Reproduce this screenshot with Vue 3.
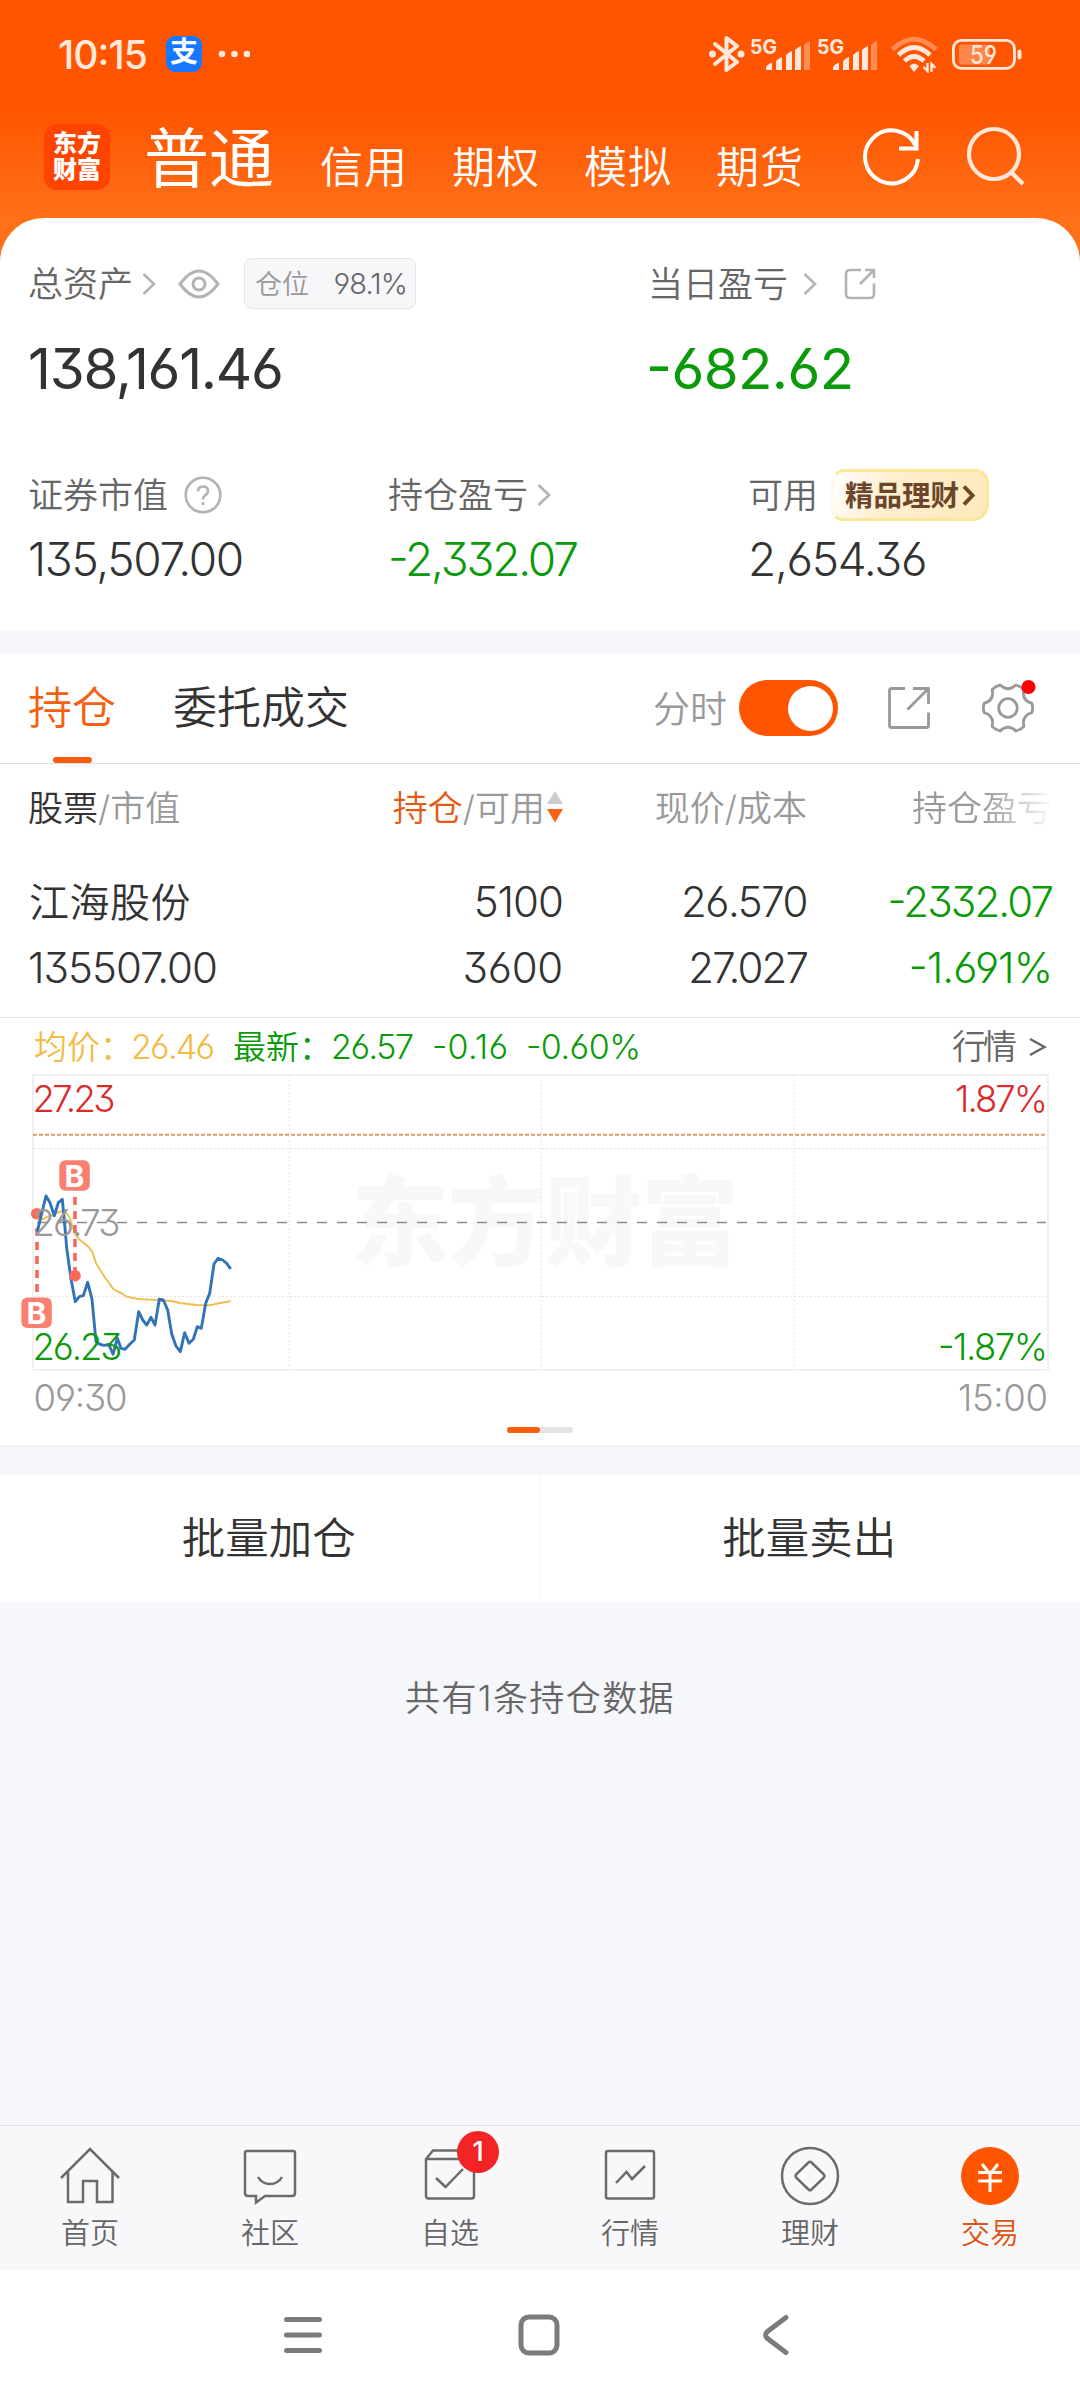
<script setup>
import { ref } from "vue";

const accounts = ["信用", "期权", "模拟", "期货"];
const showChart = ref(true);

const tabs = [
  { name: "首页", icon: "home" },
  { name: "社区", icon: "chat" },
  { name: "自选", icon: "pick", badge: 1 },
  { name: "行情", icon: "quote" },
  { name: "理财", icon: "money" },
  { name: "交易", icon: "trade", active: true }
];

const priceLine =
  "37.3,1231.7 46,1196 50,1202.7 54.3,1215.7 58.3,1202.7 62.3,1199.3 64.3,1220 66.7,1248 71,1279 75.3,1301.7 79.3,1296.7 83.3,1295.7 87.7,1282.3 92,1299.3 96,1341.7 100,1344.3 104.3,1345.3 108.7,1344.3 113,1354.3 117.3,1338.3 121,1348.3 125,1349.3 130,1344 134.3,1340 138.7,1311.7 142.7,1320 146.7,1325 151,1317.3 155,1325 159.3,1299.3 163.3,1300 167.7,1310 171.7,1334 176,1346 180.3,1351.7 184.7,1332.7 189,1343.3 193.3,1339.3 197.3,1326.7 201.3,1328.3 205.7,1303.3 209.7,1293.3 214,1264 218,1258.3 222.7,1260 226.7,1263.3 230.7,1269";
const averageLine =
  "37,1219 43.3,1218.7 48.3,1216.5 53.3,1215 59,1212 64.3,1211 69.3,1216.7 75,1234 80,1240 88.3,1246.7 92.3,1251.7 96,1263.3 104,1276 113.3,1289 121.7,1293.3 126.7,1296.7 138.3,1299 150,1299.6 171.7,1301 180,1303 196.7,1305 210,1305.3 220,1303 230.7,1301.3";

// six-tooth gear outline around the origin
function point(radius, degrees) {
  const a = (degrees * Math.PI) / 180;
  return (radius * Math.sin(a)).toFixed(2) + " " + (-radius * Math.cos(a)).toFixed(2);
}

function gearPath() {
  let d = "M" + point(24.3, -19);
  for (let i = 0; i < 6; i++) {
    const a = i * 60;
    d += " Q" + point(15.5, a) + " " + point(24.3, a + 19);
    d += " Q" + point(25.3, a + 30) + " " + point(24.3, a + 41);
  }
  return d + "Z";
}
</script>

<template>
  <div class="app">
    <header class="top">
      <div class="status">
        <span class="clock">10:15</span>
        <span class="alipay">支</span>
        <svg class="dots" width="32" height="8" viewBox="0 0 32 8">
          <circle cx="4" cy="4" r="3.3" /><circle cx="16.500" cy="4" r="3.3" /><circle cx="29" cy="4" r="3.3" />
        </svg>
        <div class="status-right">
          <svg width="36" height="40" viewBox="0 0 36 40">
            <path d="M6 10 L28 28 L17.500 36 V4 L28 12 L6 30" fill="none" stroke="#ffe9dd" stroke-width="4" stroke-linejoin="round" stroke-linecap="round" />
            <circle cx="3.500" cy="20" r="3.500" fill="#ffe9dd" /><circle cx="32" cy="20" r="3.500" fill="#ffe9dd" />
          </svg>
          <svg v-for="n in 2" :key="n" class="signal" width="62" height="36" viewBox="0 0 62 36">
            <text x="0" y="18" class="signal-text" textLength="27" lengthAdjust="spacingAndGlyphs">5G</text>
            <g fill="#ffe9dd">
              <path d="M16 34v-3q3-4 6-4v7zM26 34v-9q3-3 6-4v13zM36 34V19q3-3 6-4v19zM45 34V14q3-3 6-4v24z" />
              <path d="M54 34V9q3-3 6-4v29z" opacity="0.38" />
            </g>
          </svg>
          <svg class="wifi" width="48" height="38" viewBox="0 0 48 38">
            <g fill="none" stroke="#ffe9dd" stroke-width="4.600">
              <path d="M1.500 14.500 Q23 -6 45 14.500" opacity="0.38" />
              <path d="M7.500 20 Q23 5 39 20" /><path d="M13.500 26 Q23 17 33 26" />
            </g>
            <path d="M18.500 31 Q23 26 28 31 L23 37z" fill="#ffe9dd" />
            <path d="M36.500 28v8l-4-4M40.500 37v-8l4 4" fill="none" stroke="#ffe9dd" stroke-width="2.400" />
          </svg>
          <svg class="battery" width="72" height="32" viewBox="0 0 72 32">
            <rect x="1.400" y="2.400" width="61" height="28" rx="8" fill="none" stroke="#ffe9dd" stroke-width="2.800" />
            <rect x="7" y="6.500" width="31" height="20" rx="3" fill="#ff8548" />
            <text x="18" y="26" class="battery-text" textLength="27" lengthAdjust="spacingAndGlyphs">59</text>
            <rect x="65.500" y="11.500" width="4" height="10" rx="2" fill="#ffe9dd" />
          </svg>
        </div>
      </div>
      <nav class="accounts">
        <div class="logo"><span>东方</span><span>财富</span></div>
        <b class="current">普通</b>
        <span v-for="name in accounts" :key="name" class="account">{{ name }}</span>
        <svg class="refresh" width="58" height="60" viewBox="0 0 58 60">
          <path d="M52.500 18.500 A26.500 26.500 0 1 0 55 32" fill="none" stroke="#fff" stroke-width="4" />
          <path d="M53.500 4 V21.500 H36" fill="none" stroke="#fff" stroke-width="4" />
        </svg>
        <svg class="search" width="60" height="62" viewBox="0 0 60 62">
          <circle cx="27" cy="28" r="25" fill="none" stroke="#ffe6d6" stroke-width="4.200" />
          <path d="M44 46 L56 58" stroke="#ffe6d6" stroke-width="4.200" />
        </svg>
      </nav>
    </header>

    <section class="assets">
      <div class="asset-row first">
        <div class="asset-main">
          <span class="label">总资产</span>
          <svg class="chev" width="14" height="24" viewBox="0 0 14 24"><path d="M1.500 2 L12 12 L1.500 22" /></svg>
          <svg class="eye" width="42" height="30" viewBox="0 0 42 30">
            <path d="M2 15 Q21 -11 40 15 Q21 41 2 15Z" /><circle cx="21" cy="15" r="6" />
          </svg>
          <span class="ratio"><i>仓位</i><em>98.1%</em></span>
        </div>
        <div class="asset-side">
          <span class="label">当日盈亏</span>
          <svg class="chev far" width="14" height="24" viewBox="0 0 14 24"><path d="M1.500 2 L12 12 L1.500 22" /></svg>
          <svg class="share" width="32" height="32" viewBox="0 0 32 32">
            <path d="M17 2 H6 Q2 2 2 6 V26 Q2 30 6 30 H26 Q30 30 30 26 V15.500 M16 16 L29 3 M21 2 H30 V10" />
          </svg>
        </div>
      </div>
      <div class="asset-row big">
        <span class="asset-main">138,161.46</span>
        <span class="asset-side green loss">-682.62</span>
      </div>
      <div class="asset-grid labels">
        <div class="cell">
          <span class="label">证券市值</span>
          <svg class="help" width="38" height="38" viewBox="0 0 38 38">
            <circle cx="19" cy="19" r="17.300" />
            <path d="M14 15.500 Q14 10.500 19 10.500 Q24 10.500 24 15 Q24 17.500 21 19.500 Q19 21 19 23.500 M19 26 V29" />
          </svg>
        </div>
        <div class="cell">
          <span class="label">持仓盈亏</span>
          <svg class="chev" width="14" height="24" viewBox="0 0 14 24"><path d="M1.500 2 L12 12 L1.500 22" /></svg>
        </div>
        <div class="cell">
          <span class="label">可用</span>
          <span class="promo"><b>精品理财</b><svg width="13" height="23" viewBox="0 0 13 23"><path d="M2 2.500 L10.500 11.500 L2 20.500" /></svg></span>
        </div>
      </div>
      <div class="asset-grid values">
        <span>135,507.00</span>
        <span class="green tight">-2,332.07</span>
        <span>2,654.36</span>
      </div>
    </section>

    <section class="holdings">
      <div class="tabs">
        <span class="tab on">持仓</span>
        <span class="tab">委托成交</span>
        <span class="minute">分时</span>
        <button class="switch" :class="{ off: !showChart }" @click="showChart = !showChart"><i></i></button>
        <svg class="export" width="44" height="44" viewBox="0 0 44 44">
          <path d="M18 2.500 H4.500 Q2.500 2.500 2.500 4.500 V39.500 Q2.500 41.500 4.500 41.500 H39.500 Q41.500 41.500 41.500 39.500 V26.500 M20.500 23.500 L41 3 M26 2.500 H41.500 V18" />
        </svg>
        <svg class="gear" width="54" height="58" viewBox="-26 -29 54 58">
          <path :d="gearPath()" /><circle r="9.300" />
          <circle class="dot" cx="20.500" cy="-21" r="7" />
        </svg>
      </div>

      <div class="grid-row head">
        <span><b class="dark">股票</b>/市值</span>
        <span class="right sorted">
          <b class="orange">持仓</b>/可用<svg width="16" height="32" viewBox="0 0 16 32"><path d="M8 0 L16 13 H0Z" fill="#ccc" /><path d="M0 18 H16 L8 31.500Z" fill="#f76413" /></svg>
        </span>
        <span class="right">现价/成本</span>
        <span class="right fade">持仓盈亏</span>
      </div>
      <div class="grid-row name-row">
        <span class="name">江海股份</span>
        <span class="right">5100</span>
        <span class="right price">26.570</span>
        <span class="right green tight">-2332.07</span>
      </div>
      <div class="grid-row value-row">
        <span>135507.00</span>
        <span class="right wide">3600</span>
        <span class="right tight">27.027</span>
        <span class="right green">-1.691%</span>
      </div>

      <div v-if="showChart" class="chart">
        <svg width="1080" height="428" viewBox="0 1018 1080 428">
          <g class="info">
            <text x="34" y="1059" fill="#f2bb46" class="cjk">均价：</text>
            <text x="131" y="1059" fill="#f2bb46" textLength="84">26.46</text>
            <text x="233" y="1059" class="cjk">最新：</text>
            <text x="331" y="1059" textLength="83">26.57</text>
            <text x="432" y="1059" textLength="76">-0.16</text>
            <text x="526" y="1059" textLength="115">-0.60%</text>
            <text x="952" y="1058.500" fill="#666" textLength="65">行情</text>
          </g>
          <path d="M1030 1039 L1044.500 1047 L1030 1055" fill="none" stroke="#666" stroke-width="2.400" />

          <text x="351" y="1258" class="watermark" textLength="388">东方财富</text>
          <rect x="33" y="1075" width="1015" height="295" fill="none" stroke="#f0f0f0" stroke-width="2" />
          <path d="M289.500 1076 V1369 M541.500 1076 V1369 M794 1076 V1369 M34 1148.500 H1047 M34 1296.500 H1047" stroke="#e6e6e6" stroke-width="1" stroke-dasharray="2 2" />
          <path d="M33 1134.800 H1046" stroke="#dd9a68" stroke-width="2" stroke-dasharray="4 2" />
          <path d="M37 1222.500 H1046" stroke="#8c8c8c" stroke-width="1.300" stroke-dasharray="10 10" />

          <circle cx="36.700" cy="1213.700" r="5.800" class="mark" />
          <polyline :points="averageLine" fill="none" stroke="#f0bd4c" stroke-width="1.900" />
          <path d="M37 1228 V1292 M75 1197 V1271" class="mark-line" />
          <polyline :points="priceLine" fill="none" stroke="#3273b8" stroke-width="2.900" stroke-linejoin="round" />
          <circle cx="75" cy="1275.700" r="5.800" class="mark" />
          <g class="buy">
            <rect x="59.300" y="1160.300" width="30.500" height="30.500" rx="6" />
            <text x="74.500" y="1186.500">B</text>
            <rect x="21.300" y="1297.500" width="30.500" height="30.500" rx="6" />
            <text x="36.500" y="1323.700">B</text>
          </g>
          <g class="axis">
            <text x="32.500" y="1112" fill="#d92b2b" textLength="83">27.23</text>
            <text x="32.500" y="1236" fill="#999" textLength="88">26.73</text>
            <text x="32.500" y="1360" fill="#0a9a0a" textLength="90">26.23</text>
            <text x="955" y="1112" fill="#d92b2b" textLength="93">1.87%</text>
            <text x="938" y="1360" fill="#0a9a0a" textLength="110">-1.87%</text>
            <text x="33.500" y="1411" fill="#999" textLength="94">09:30</text>
            <text x="958" y="1411" fill="#999" textLength="90">15:00</text>
          </g>
          <rect x="538" y="1427" width="35" height="6" rx="3" fill="#e4e4e4" />
          <rect x="507" y="1427" width="33" height="6" rx="3" fill="#fa5c0c" />
        </svg>
      </div>
    </section>

    <section class="batch">
      <button>批量加仓</button>
      <button>批量卖出</button>
    </section>

    <p class="total">共有1条持仓数据</p>

    <nav class="tabbar">
      <a v-for="tab in tabs" :key="tab.name" :class="{ active: tab.active }">
        <svg width="64" height="64" viewBox="-32 -32 64 64">
          <path v-if="tab.icon === 'home'" d="M-29 2 L0 -27 L29 2 M-22 -4 V26 H-7 V5 H7 V26 H22.500 V-4" />
          <path v-else-if="tab.icon === 'chat'" d="M-23 -25 H23 Q25 -25 25 -23 V17 Q25 20 22 20 H-5 L-14 26.500 V20 H-22 Q-25 20 -25 17 V-23 Q-25 -25 -23 -25Z M-12 1 Q-8 8 0 8 Q8 8 12 1" />
          <path v-else-if="tab.icon === 'pick'" d="M-24 -17 L-17 -25.500 H17 L24 -17 V20 Q24 22.500 21.500 22.500 H-21.500 Q-24 22.500 -24 20Z H24 M-14 2 L-4.500 11 L13 -7" />
          <path v-else-if="tab.icon === 'quote'" d="M-22 -25 H22 Q24 -25 24 -23 V20.500 Q24 22.500 22 22.500 H-22 Q-24 22.500 -24 20.500 V-23 Q-24 -25 -22 -25Z M-14 7 L-3.500 -4 L2 3 L15 -10" />
          <g v-else-if="tab.icon === 'money'">
            <circle r="28" />
            <path d="M-1.500 -13.500 Q0 -15 1.500 -13.500 L14 -1.500 Q15 0 14 1.500 L1.500 13.500 Q0 15 -1.500 13.500 L-14 1.500 Q-15 0 -14 -1.500Z" />
          </g>
          <g v-else>
            <circle class="disc" r="29" />
            <path class="yen" d="M-8 -12 L0 -2 L8 -12 M0 -2 V16 M-12 -3.500 H12 M-12 5 H12" />
          </g>
        </svg>
        <span>{{ tab.name }}</span>
        <i v-if="tab.badge" class="badge">{{ tab.badge }}</i>
      </a>
    </nav>

    <footer class="system">
      <svg width="44" height="44" viewBox="-22 -22 44 44"><path d="M-16.500 -15.500 H16.500 M-16.500 0 H16.500 M-16.500 15.500 H16.500" /></svg>
      <svg width="44" height="44" viewBox="-22 -22 44 44"><rect x="-18" y="-18" width="36" height="36" rx="8" /></svg>
      <svg width="44" height="44" viewBox="-22 -22 44 44"><path d="M11 -17.500 L-7.500 -3.500 Q-11.500 0 -7.500 3.500 L11 17.500" /></svg>
    </footer>
  </div>
</template>

<style>
body {
  margin: 0;
}
</style>

<style scoped>
.app {
  display: flex;
  flex-direction: column;
  width: 1080px;
  height: 2400px;
  background: #f6f7fa;
  color: #333;
  font-family: Inter, "Noto Sans CJK SC", sans-serif;
  font-weight: 350;
  font-feature-settings: "cv03", "cv04", "cv09", "case";
  white-space: nowrap;
}

b,
i,
em {
  font-weight: inherit;
  font-style: normal;
}

svg {
  display: block;
  flex: none;
}

.green {
  color: #0a9a0a;
}

.top {
  height: 262px;
  background: linear-gradient(#ff5500 110px, #ff7019 218px);
}

.status {
  display: flex;
  align-items: center;
  height: 108px;
  padding-left: 58px;
}

.clock {
  width: 108px;
  color: #ffe9dd;
  font-size: 39px;
  font-weight: 500;
  letter-spacing: -0.9px;
}

.alipay {
  width: 36px;
  height: 36px;
  margin-right: 16px;
  border-radius: 9px;
  background: #1677ff;
  color: #fff;
  font-size: 28px;
  font-weight: 700;
  line-height: 33px;
  text-align: center;
}

.dots {
  fill: #ffe9dd;
}

.status-right {
  display: flex;
  align-items: center;
  margin-left: auto;
  padding-right: 56px;
}

.signal {
  margin-left: 5px;
  overflow: visible;
}

.signal:first-of-type {
  margin-left: 8px;
}

.signal-text {
  fill: #ffe9dd;
  font-size: 20px;
  font-weight: 700;
}

.wifi {
  margin-left: 12px;
}

.battery {
  margin-left: 13px;
}

.battery-text {
  fill: #ffe9dd;
  font-size: 26px;
  font-weight: 500;
}

.accounts {
  display: flex;
  align-items: center;
  height: 98px;
  padding-left: 44px;
  color: #fff;
}

.logo {
  display: flex;
  flex-direction: column;
  justify-content: center;
  width: 66px;
  height: 66px;
  margin-right: 34px;
  border-radius: 13px;
  background: #ff4400;
  font-size: 24px;
  font-weight: 900;
  line-height: 27px;
  text-align: center;
}

.logo span {
  margin-top: -1px;
}

.current {
  width: 176px;
  padding-bottom: 7px;
  font-size: 65px;
  font-weight: 400;
}

.account {
  width: 132px;
  padding-top: 14px;
  font-size: 43px;
  letter-spacing: 1px;
}

.refresh {
  margin-left: 15px;
}

.search {
  margin-left: 46px;
}

.assets {
  box-sizing: border-box;
  height: 413px;
  margin-top: -44px;
  border-radius: 44px 44px 0 0;
  background: #fff;
}

.asset-row,
.asset-main,
.asset-side {
  display: flex;
  align-items: center;
}

.asset-row {
  padding-left: 28px;
}

.asset-main {
  width: 620px;
}

.first {
  height: 131px;
}

.label {
  padding-bottom: 5px;
  color: #666;
  font-size: 35px;
}

.chev {
  margin-left: 9px;
}

.chev.far {
  margin: 0 27px 0 15px;
}

.chev path,
.eye *,
.share path,
.help * {
  fill: none;
  stroke: #b3b3b3;
  stroke-width: 2.6;
}

.eye {
  margin: 0 24px 0 22px;
}

.eye * {
  stroke-width: 3;
}

.ratio {
  display: flex;
  box-sizing: border-box;
  align-items: center;
  justify-content: space-between;
  width: 172px;
  height: 51px;
  padding: 0 8px 0 10px;
  border: 1px solid #e4e4e8;
  border-radius: 8px;
  background: #f7f7fa;
}

.ratio i {
  padding-bottom: 2px;
  color: #999;
  font-size: 27px;
}

.ratio em {
  color: #666;
  font-size: 29px;
  letter-spacing: -0.9px;
}

.big {
  height: 38px;
  font-size: 56.5px;
  font-weight: 400;
  letter-spacing: -1.3px;
}

.loss {
  margin-left: -2px;
  letter-spacing: -0.6px;
}

.asset-grid {
  display: grid;
  grid-template-columns: 360px 360px 1fr;
  align-items: center;
  padding-left: 28px;
}

.labels {
  height: 51px;
  margin-top: 80px;
}

.cell {
  display: flex;
  align-items: center;
}

.help {
  margin-left: 16px;
}

.promo {
  display: flex;
  box-sizing: border-box;
  align-items: center;
  width: 158px;
  height: 52px;
  margin-left: 13px;
  padding-left: 11px;
  border: 3px solid #fbe797;
  border-left-color: #fffaf0;
  border-radius: 14px 14px 16px 12px;
  background: linear-gradient(110deg, #fff 0%, #feefcf 35%, #fee9bb 100%);
  color: #6b452c;
  font-size: 28.5px;
  font-weight: 700;
}

.promo b {
  padding-bottom: 4px;
}

.promo svg {
  margin-left: 3px;
}

.promo path {
  fill: none;
  stroke: #6b452c;
  stroke-width: 4;
}

.values {
  height: 40px;
  margin-top: 13px;
  font-size: 46px;
  letter-spacing: -1.3px;
}

.values .tight {
  letter-spacing: -2.2px;
}

.holdings {
  height: 793px;
  margin-top: 22px;
  border-bottom: 1px solid #e8eaec;
  background: #fff;
}

.tabs {
  display: flex;
  box-sizing: border-box;
  align-items: center;
  height: 111px;
  padding-left: 28px;
  border-bottom: 1px solid #dedede;
}

.tab {
  position: relative;
  height: 109px;
  margin-right: 57px;
  font-size: 44px;
  line-height: 108px;
}

.on {
  color: #f4600f;
}

.on::after {
  position: absolute;
  bottom: 0;
  left: 25px;
  width: 39px;
  height: 6px;
  border-radius: 3px;
  background: #f85a0c;
  content: "";
}

.minute {
  margin-left: auto;
  padding-bottom: 3px;
  color: #999;
  font-size: 37px;
}

.switch {
  display: flex;
  align-items: center;
  justify-content: flex-end;
  width: 99px;
  height: 56px;
  margin: 0 49px 0 12px;
  padding: 0 5px;
  border: 0;
  border-radius: 28px;
  background: #ff5500;
}

.switch.off {
  justify-content: flex-start;
  background: #ccc;
}

.switch i {
  width: 45px;
  height: 45px;
  border-radius: 50%;
  background: #fff;
}

.export path,
.gear * {
  fill: none;
  stroke: #999;
  stroke-width: 2.8;
  stroke-linejoin: round;
}

.gear {
  margin: 0 44px 0 51px;
}

.gear .dot {
  fill: #ff0000;
  stroke: none;
}

.grid-row {
  display: grid;
  grid-template-columns: 281px 254px 244px 245px;
  align-items: center;
  padding-left: 28px;
  font-size: 42px;
  letter-spacing: -1px;
}

.right {
  text-align: right;
}

.grid-row .wide {
  letter-spacing: -0.3px;
}

.grid-row .price {
  letter-spacing: -1.5px;
}

.grid-row .tight {
  letter-spacing: -1.9px;
}

.head {
  height: 82px;
  padding-bottom: 5px;
  color: #999;
  font-size: 35px;
  letter-spacing: 0;
}

.dark {
  color: #333;
}

.orange {
  color: #e35a12;
}

.sorted {
  display: flex;
  align-items: center;
  justify-content: flex-end;
}

.sorted svg {
  margin: 4px 0 0 2px;
}

.fade {
  background: linear-gradient(90deg, #999 72%, #f4f4f4 98%);
  background-clip: text;
  color: transparent;
}

.name-row {
  height: 66px;
  margin-top: 17px;
}

.name {
  padding-bottom: 3px;
  padding-left: 1px;
  font-size: 40px;
  letter-spacing: 0.5px;
}

.value-row {
  box-sizing: border-box;
  height: 84px;
  padding-bottom: 16px;
  border-bottom: 1px solid #e8e8e8;
}

.info text {
  font-size: 34px;
}

.info .cjk {
  font-size: 33px;
}

.info {
  fill: #0a9a0a;
}

.axis text {
  font-size: 36.5px;
}

.watermark {
  fill: #f8f8f8;
  font-size: 98px;
  font-weight: 900;
}

.mark {
  fill: #fb6a58;
}

.mark-line {
  fill: none;
  stroke: #f4695c;
  stroke-width: 3.6;
  stroke-dasharray: 8 6;
}

.buy rect {
  fill: #fb8070;
}

.buy text {
  fill: #fff;
  font-size: 30px;
  font-weight: 700;
  text-anchor: middle;
}

.batch {
  display: flex;
  height: 127px;
  margin-top: 28px;
  background: #fff;
}

.batch button {
  flex: 1;
  padding: 0 2px 6px 0;
  border: 0;
  background: none;
  color: #333;
  font: inherit;
  font-size: 43.5px;
}

.batch button + button {
  border-left: 1px solid #f4f4f4;
}

.total {
  margin: 76px 0 0;
  color: #666;
  font-size: 35px;
  letter-spacing: 1.4px;
  line-height: 40px;
  text-align: center;
}

.tabbar {
  display: flex;
  box-sizing: border-box;
  height: 145px;
  margin-top: auto;
  border-top: 1px solid #e0e0e2;
  background: #f8f8fb;
}

.tabbar a {
  display: flex;
  position: relative;
  flex: 1;
  flex-direction: column;
  align-items: center;
  padding-top: 18px;
  color: #666;
  font-size: 29px;
  line-height: 51px;
}

.tabbar svg {
  fill: none;
  stroke: #6b6b6b;
  stroke-width: 2.5;
}

.tabbar .disc {
  fill: #ff5500;
  stroke: none;
}

.tabbar .yen {
  stroke: #fff;
  stroke-width: 3;
}

.tabbar .active {
  color: #dd5510;
}

.badge {
  position: absolute;
  top: 5px;
  left: 97px;
  width: 42px;
  height: 42px;
  border-radius: 50%;
  background: #f22424;
  color: #fff;
  font-size: 27px;
  font-weight: 500;
  line-height: 41px;
  text-align: center;
}

.system {
  display: flex;
  align-items: center;
  justify-content: center;
  gap: 192px;
  height: 130px;
  padding-right: 3px;
  background: #fff;
}

.system svg {
  fill: none;
  stroke: #7b7b7b;
  stroke-width: 5;
  stroke-linecap: round;
}
</style>
